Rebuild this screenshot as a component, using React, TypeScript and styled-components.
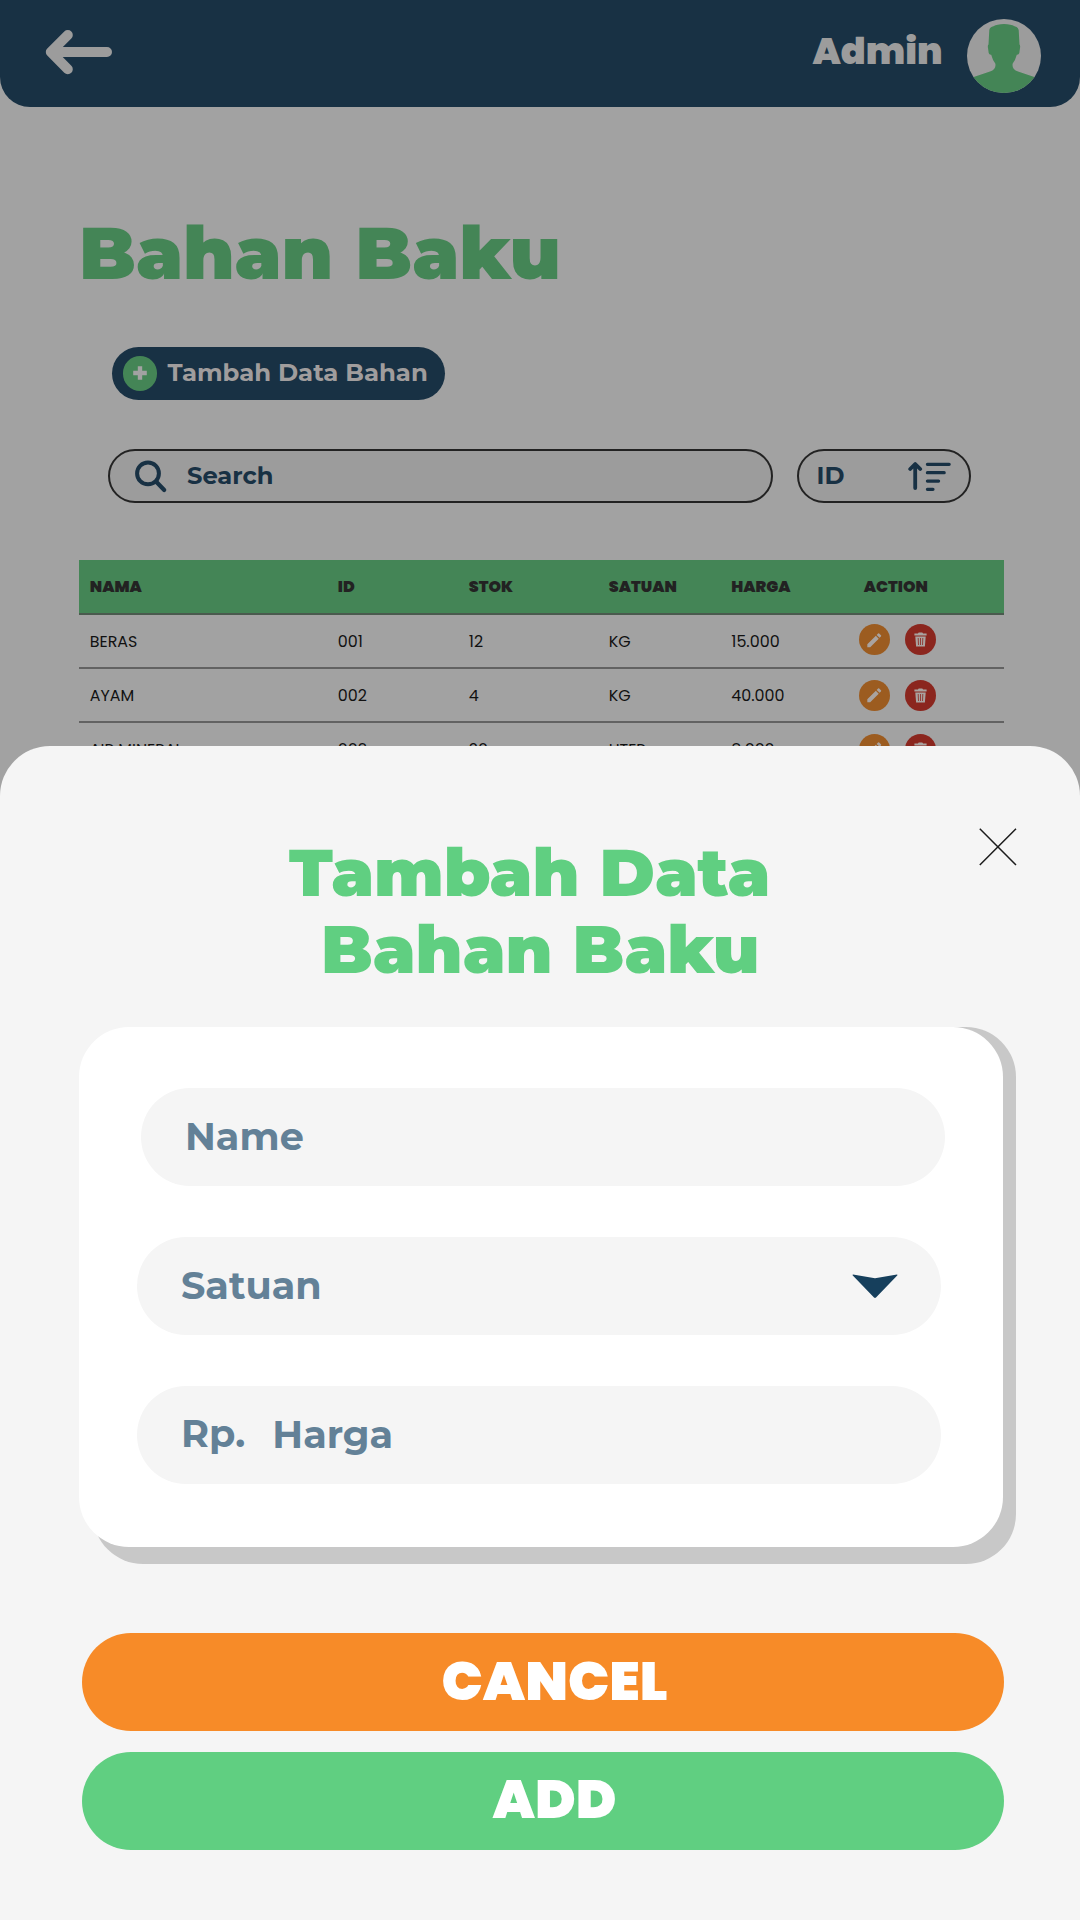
import React from "react";
import styled, { createGlobalStyle } from "styled-components";
import { MdEdit } from "react-icons/md";

const display = `Montserrat, Inter, "Liberation Sans", sans-serif`;
const body = `Poppins, Inter, "Liberation Sans", sans-serif`;

const GlobalStyle = createGlobalStyle`
  * { box-sizing: border-box; }
  body {
    margin: 0;
    background: #a2a2a2;
    font-family: ${display};
  }
`;

const Screen = styled.main`
  position: relative;
  width: 1080px;
  height: 1920px;
  overflow: hidden;
  background: #a2a2a2;
  white-space: nowrap;
`;

const Header = styled.header`
  display: flex;
  justify-content: space-between;
  height: 107.4px;
  padding: 19px 39px 0 45px;
  background: #183144;
  border-radius: 0 0 30px 30px;
`;

const BackButton = styled.button`
  display: flex;
  height: 46px;
  margin-top: 10px;
  padding: 0;
  border: 0;
  background: none;
`;

const Account = styled.div`
  display: flex;
`;

const AccountName = styled.div`
  width: 154.5px;
  line-height: 64px;
  font-family: ${body};
  font-size: 36.7px;
  font-weight: 900;
  color: #9c9c9c;
`;

const Content = styled.section`
  padding: 0 76px 0 79px;
`;

const PageTitle = styled.h1`
  margin: 103.6px 0 0;
  height: 84px;
  line-height: 84px;
  font-size: 73.6px;
  font-weight: 900;
  color: #448556;
`;

const AddButton = styled.button`
  display: flex;
  align-items: center;
  gap: 10.5px;
  width: 333px;
  height: 53px;
  margin: 52px 0 0 33px;
  padding: 0 0 0 10.5px;
  border: 0;
  border-radius: 26.5px;
  background: #183144;
  color: #a09d9d;
  font: 700 24.4px/51px ${display};
`;

const PlusBadge = styled.span`
  display: grid;
  place-items: center;
  width: 34.5px;
  height: 34.5px;
  border-radius: 50%;
  background: #448556;
`;

const ButtonText = styled.span`
  height: 53px;
`;

const Filters = styled.div`
  display: flex;
  justify-content: space-between;
  width: 863px;
  margin: 49px 0 0 29px;
`;

const Pill = styled.div<{ $width: number }>`
  display: flex;
  align-items: center;
  width: ${(p) => p.$width}px;
  height: 54px;
  border: 2px solid #222;
  border-radius: 27px;
  background: #9c9c9c;
  color: #183144;
  font-size: 24.2px;
  font-weight: 700;
  line-height: 50px;
`;

const SearchPill = styled(Pill)`
  padding-left: 24px;
  gap: 19px;
`;

const SortPill = styled(Pill)`
  padding: 0 18px 0 18px;
  justify-content: space-between;
`;

const Table = styled.div`
  margin-top: 57px;
  width: 925px;
  font-family: ${body};
`;

const TableRow = styled.div`
  display: grid;
  grid-template-columns: 248px 131px 140px 122.5px 127.5px 1fr;
  align-items: center;
  height: 54px;
  padding-left: 10.8px;
  border-bottom: 2px solid #626262;
  color: #111;
  font-size: 15.9px;
  line-height: 52px;
`;

const HeadRow = styled(TableRow)`
  height: 55px;
  background: #448556;
  border-color: #4a5a4e;
  color: #222;
  font-weight: 900;
`;

const Cell = styled.div`
  padding-top: 1px;
`;

const ActionHeading = styled(Cell)`
  padding-left: 5px;
`;

const Actions = styled.div<{ $lift: number }>`
  display: flex;
  gap: 14.8px;
  margin-bottom: ${(p) => p.$lift}px;
`;

const RoundButton = styled.button<{ $tone: string }>`
  display: grid;
  place-items: center;
  width: 31px;
  height: 31px;
  padding: 0;
  border: 0;
  border-radius: 50%;
  background: ${(p) => p.$tone};
  color: #a9a3a0;
`;

const Sheet = styled.section`
  position: absolute;
  left: 0;
  right: 0;
  top: 745.5px;
  bottom: 0;
  padding: 82.5px 63.5px 0 79px;
  border-radius: 50px 50px 0 0;
  background: #f5f5f5;
`;

const SheetTop = styled.div`
  display: flex;
  justify-content: space-between;
  height: 199px;
  padding-left: 210px;
`;

const SheetTitle = styled.h2`
  margin: 6px 0 0;
  color: #60cf81;
  font-size: 67px;
  font-weight: 900;
  line-height: 77px;
`;

const SecondLine = styled.div`
  padding-left: 32px;
`;

const CloseButton = styled.button`
  display: flex;
  width: 38px;
  height: 38px;
  padding: 0;
  border: 0;
  background: none;
`;

/* The grey slab starts a little right of the card and ends below it. */
const Slab = styled.div`
  width: 923.5px;
  height: 536.6px;
  margin-left: 13.5px;
  border-radius: 50px;
  background: #c8c8c8;
`;

const Card = styled.form`
  display: flex;
  flex-direction: column;
  gap: 51.4px;
  width: 924.4px;
  height: 519.5px;
  margin-left: -13.5px;
  padding: 61px 0 0 58px;
  border-radius: 50px;
  background: #fff;
`;

const Field = styled.div<{ $inset?: number }>`
  display: flex;
  flex: none;
  width: 804px;
  height: 97.8px;
  margin-left: ${(p) => p.$inset ?? 0}px;
  padding-left: 44px;
  border-radius: 48.9px;
  background: #f5f5f5;
  color: #638197;
  font-size: 38.2px;
  font-weight: 700;
  line-height: 98.6px;
`;

const SelectField = styled(Field)`
  justify-content: space-between;
  align-items: center;
  padding-right: 43.5px;
`;

const Prefix = styled.div`
  width: 91.3px;
  line-height: 96px;
`;

const ActionList = styled.div`
  display: flex;
  flex-direction: column;
  gap: 21px;
  margin: 69.4px 0 0 3px;
`;

const WideButton = styled.button<{ $tone: string; $pad: number; $lift: number }>`
  display: block;
  width: 922px;
  height: 98px;
  padding: 0 0 ${(p) => p.$lift}px ${(p) => p.$pad}px;
  border: 0;
  border-radius: 49px;
  background: ${(p) => p.$tone};
  color: #fff;
  text-align: left;
  font: 900 54.9px/94px ${body};
`;

const BackArrow = () => (
  <svg width="68" height="46" viewBox="0 0 68 46" fill="none" stroke="#9c9c9c" strokeWidth="10" strokeLinecap="round" strokeLinejoin="round">
    <path d="M22.8 6 L5.8 23 L22.8 40.2 M8 23 H62" />
  </svg>
);

const Avatar = () => (
  <svg width="74" height="74" viewBox="0 0 74 74">
    <defs>
      <clipPath id="avatar-disc">
        <circle cx="37" cy="37" r="37" />
      </clipPath>
    </defs>
    <circle cx="37" cy="37" r="37" fill="#9c9c9c" />
    <path
      clipPath="url(#avatar-disc)"
      fill="#448556"
      d="M22.3 11 Q23 7.8 26.5 7.2 Q30 5 37 4.9 Q44 5 47.5 7.2 Q51 7.8 51.7 11 L52.5 25.5 Q53.5 26.5 53 29 L52.3 34 Q51.8 36 49.8 35.8 Q48.5 41 45.7 44.5 Q44.5 50 51 52.5 L67.3 58 L74 61 V74 H0 V61 L6.7 58 L23 52.5 Q29.5 50 28.3 44.5 Q25.5 41 24.2 35.8 Q22.2 36 21.7 34 L21 29 Q20.5 26.5 21.5 25.5 Z"
    />
  </svg>
);

const Plus = () => (
  <svg width="14" height="14" viewBox="0 0 14 14" fill="none" stroke="#a2a2a2" strokeWidth="4.4">
    <path d="M7 0.2 V13.8 M0.2 7 H13.8" />
  </svg>
);

const Magnifier = () => (
  <svg width="34" height="34" viewBox="0 0 34 34" fill="none" stroke="#183144" strokeLinecap="round">
    <circle cx="14" cy="14.4" r="10.9" strokeWidth="4" />
    <path d="M22.5 23 L30.2 31" strokeWidth="4.2" />
  </svg>
);

const SortIcon = () => (
  <svg width="43" height="30" viewBox="0 0 43 30" fill="none" stroke="#183144" strokeLinecap="round" strokeLinejoin="round">
    <path d="M7.2 27 V3.2 M2.2 8 L7.2 3 L12.2 8" strokeWidth="3.8" />
    <path d="M19.4 3.3 H41.2 M19.4 11.7 H36.2 M19.4 20.1 H30.6 M19.4 28.3 H25" strokeWidth="3.2" />
  </svg>
);

const Trash = () => (
  <svg width="13" height="15" viewBox="0 0 13 15" fill="currentColor">
    <path d="M0.4 1.4 H3.9 L4.7 0.4 H8.3 L9.1 1.4 H12.6 V3.5 H0.4 Z" />
    <path d="M1.3 4.5 H11.7 L10.9 14.4 H2.1 Z" />
    <path d="M4.2 6 L4.5 13 M6.5 6 V13 M8.8 6 L8.5 13" stroke="#8b261e" strokeWidth="0.8" />
  </svg>
);

const CloseIcon = () => (
  <svg width="38" height="38" viewBox="0 0 38 38" stroke="#1c1c1c" strokeWidth="1.5">
    <path d="M0.8 0.8 L37 37 M37 0.8 L0.8 37" />
  </svg>
);

const Caret = () => (
  <svg width="46" height="25" viewBox="0 0 46 25" fill="#163f5c">
    <path d="M1 0.4 Q0 0.6 0.8 1.6 L22 23.6 Q23 24.4 24 23.6 L45.2 1.6 Q46 0.6 45 0.4 L23 4.2 Z" />
  </svg>
);

const headings = ["NAMA", "ID", "STOK", "SATUAN", "HARGA"];

const materials = [
  { cells: ["BERAS", "001", "12", "KG", "15.000"], lift: 3 },
  { cells: ["AYAM", "002", "4", "KG", "40.000"], lift: 0 },
  { cells: ["AIR MINERAL", "003", "20", "LITER", "8.000"], lift: 0 },
];

export default function App() {
  return (
    <Screen>
      <GlobalStyle />
      <Header>
        <BackButton aria-label="Kembali">
          <BackArrow />
        </BackButton>
        <Account>
          <AccountName>Admin</AccountName>
          <Avatar />
        </Account>
      </Header>

      <Content>
        <PageTitle>Bahan Baku</PageTitle>
        <AddButton>
          <PlusBadge>
            <Plus />
          </PlusBadge>
          <ButtonText>Tambah Data Bahan</ButtonText>
        </AddButton>

        <Filters>
          <SearchPill $width={665}>
            <Magnifier />
            <span>Search</span>
          </SearchPill>
          <SortPill $width={174.5}>
            <span>ID</span>
            <SortIcon />
          </SortPill>
        </Filters>

        <Table>
          <HeadRow>
            {headings.map((h) => (
              <Cell key={h}>{h}</Cell>
            ))}
            <ActionHeading>ACTION</ActionHeading>
          </HeadRow>
          {materials.map((m) => (
            <TableRow key={m.cells[0]}>
              {m.cells.map((text, i) => (
                <Cell key={i}>{text}</Cell>
              ))}
              <Actions $lift={m.lift}>
                <RoundButton $tone="#9c5c20" aria-label="Ubah">
                  <MdEdit size={18.5} />
                </RoundButton>
                <RoundButton $tone="#8b261e" aria-label="Hapus">
                  <Trash />
                </RoundButton>
              </Actions>
            </TableRow>
          ))}
        </Table>
      </Content>

      <Sheet>
        <SheetTop>
          <SheetTitle>
            Tambah Data
            <SecondLine>Bahan Baku</SecondLine>
          </SheetTitle>
          <CloseButton aria-label="Tutup">
            <CloseIcon />
          </CloseButton>
        </SheetTop>

        <Slab>
          <Card>
            <Field $inset={4}>Name</Field>
            <SelectField>
              <span>Satuan</span>
              <Caret />
            </SelectField>
            <Field>
              <Prefix>Rp.</Prefix>
              <span>Harga</span>
            </Field>
          </Card>
        </Slab>

        <ActionList>
          <WideButton $tone="#f78b28" $pad={359.4} $lift={2}>CANCEL</WideButton>
          <WideButton $tone="#60cf81" $pad={410.5} $lift={4}>ADD</WideButton>
        </ActionList>
      </Sheet>
    </Screen>
  );
}
